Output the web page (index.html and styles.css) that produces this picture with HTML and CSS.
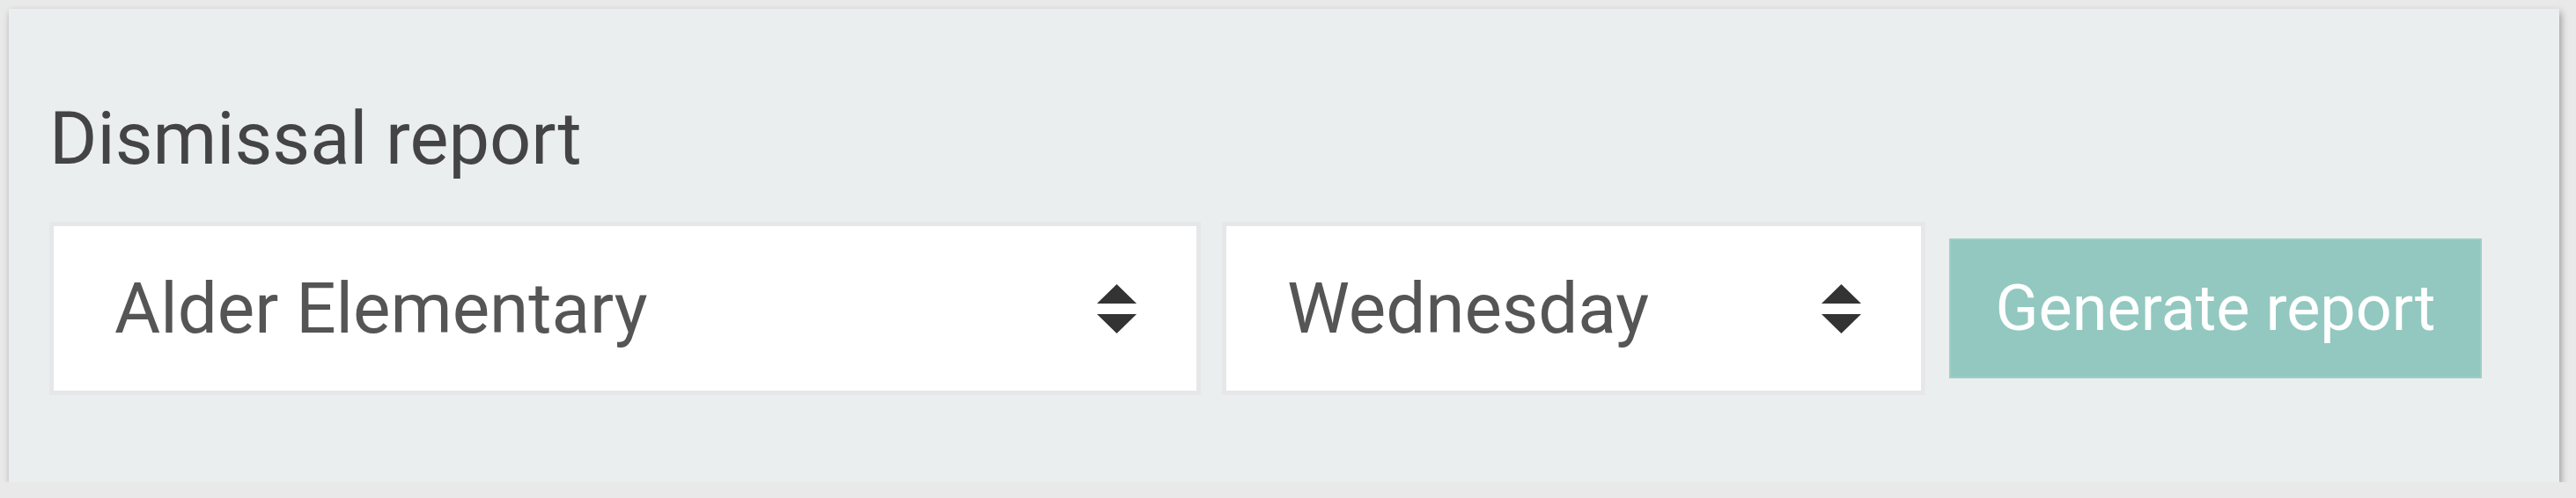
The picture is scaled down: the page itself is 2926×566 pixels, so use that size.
FILE: index.html
```html
<!DOCTYPE html>
<html lang="en">
<head>
<meta charset="utf-8">
<title>Dismissal report</title>
<link rel="stylesheet" href="styles.css">
</head>
<body>
<section class="card">
  <h2 class="card-title">Dismissal report</h2>
  <div class="controls">
    <div class="select select-school" role="combobox">
      <span class="select-value">Alder Elementary</span>
      <svg class="select-arrows" viewBox="0 0 45 56" width="45" height="56" aria-hidden="true">
        <polygon points="22.5,0 45,22 0,22" fill="#333"/>
        <polygon points="0,34 45,34 22.5,56" fill="#333"/>
      </svg>
    </div>
    <div class="select select-day" role="combobox">
      <span class="select-value">Wednesday</span>
      <svg class="select-arrows" viewBox="0 0 45 56" width="45" height="56" aria-hidden="true">
        <polygon points="22.5,0 45,22 0,22" fill="#333"/>
        <polygon points="0,34 45,34 22.5,56" fill="#333"/>
      </svg>
    </div>
    <button class="btn-generate" type="button">Generate report</button>
  </div>
</section>
</body>
</html>
```
FILE: styles.css
```css
html, body {
  margin: 0;
  padding: 0;
}
body {
  background: #e9e9e9;
  font-family: Roboto, "Liberation Sans", sans-serif;
  padding: 10px 0 0 10px;
}
.card {
  box-sizing: border-box;
  width: 2897px;
  height: 538px;
  background: #ebeeef;
  box-shadow: 2px 4px 8px rgba(0, 0, 0, 0.35);
  padding: 99px 46px 0 46px;
}
.card-title {
  margin: 0;
  font-size: 83px;
  font-weight: 400;
  line-height: 97px;
  color: #444446;
}
.controls {
  margin-top: 46px;
  display: flex;
  align-items: center;
}
.select {
  box-sizing: border-box;
  height: 197px;
  border: 5px solid #e5e7e8;
  background: #fff;
  display: flex;
  align-items: center;
  justify-content: space-between;
  padding: 0 68px 0 69px;
}
.select-school {
  width: 1308px;
}
.select-day {
  width: 799px;
  margin-left: 24px;
}
.select-value {
  font-size: 80px;
  color: #555;
  line-height: 1;
}
.select-arrows {
  display: block;
}
.btn-generate {
  box-sizing: border-box;
  margin-left: 27px;
  width: 605px;
  height: 159px;
  background: #92c8bf;
  border: 2px solid #9dcfc6;
  color: #fff;
  font-family: Roboto, "Liberation Sans", sans-serif;
  font-size: 72px;
  padding: 0;
  cursor: pointer;
}
```
